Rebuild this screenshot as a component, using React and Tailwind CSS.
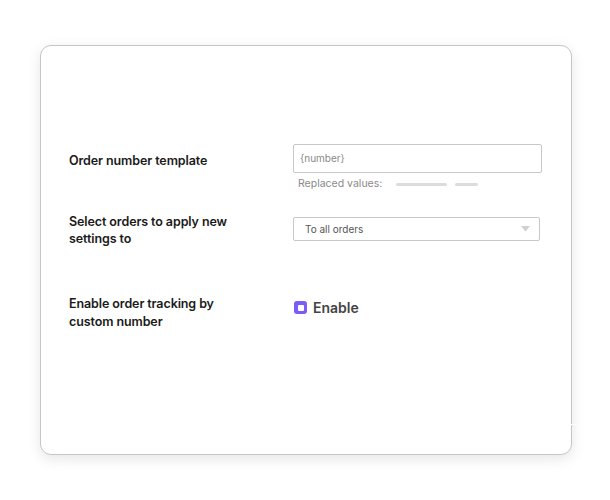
import React from "react";

export default function App() {
  return (
    <div className="w-[610px] h-[500px] bg-white relative" style={{ fontFamily: "Inter, 'Noto Sans', sans-serif" }}>
      <div className="absolute left-[40px] top-[45px] w-[532px] h-[410px] rounded-[11px] border border-[#c6c6c6] bg-white shadow-[0_4px_14px_rgba(0,0,0,0.10)] pt-[98px] pl-[28px]">
        {/* Row 1 */}
        <div className="flex items-start">
          <div className="w-[224px] h-[29px] pt-[6px] flex items-center text-[12.5px] font-semibold text-[#1a1a1a] tracking-[-0.1px]">
            Order number template
          </div>
          <div className="flex flex-col">
            <div className="w-[249px] h-[29px] border border-[#c8c8c8] rounded-[2px] flex items-center pl-[6px] text-[10px] text-[#8a8a8a]">
              {"{number}"}
            </div>
            <div className="flex items-center mt-[4px] pl-[5px] h-[14px]">
              <span className="text-[10.5px] text-[#8a8a8a]">Replaced values:</span>
              <span className="ml-[14px] w-[51px] h-[3px] rounded-full bg-[#dcdcdc]" />
              <span className="ml-[8px] w-[23px] h-[3px] rounded-full bg-[#dcdcdc]" />
            </div>
          </div>
        </div>

        {/* Row 2 */}
        <div className="flex items-start mt-[23px]">
          <div className="w-[224px] text-[12.5px] leading-[16.5px] font-semibold text-[#1a1a1a] tracking-[-0.1px]">
            Select orders to apply new
            <br />
            settings to
          </div>
          <div className="mt-[3px] w-[247px] h-[24px] border border-[#c8c8c8] rounded-[2px] flex items-center justify-between pl-[11px] pr-[9px] text-[10px] text-[#555]">
            <span>To all orders</span>
            <svg width="9" height="6" viewBox="0 0 9 6">
              <path d="M0 0 L9 0 L4.5 5.5 Z" fill="#d0d0d0" />
            </svg>
          </div>
        </div>

        {/* Row 3 */}
        <div className="flex items-start mt-[48px]">
          <div className="w-[224px] text-[12.5px] leading-[18px] font-semibold text-[#1a1a1a] tracking-[-0.1px]">
            Enable order tracking by
            <br />
            custom number
          </div>
          <div className="flex items-center mt-[2px] ml-[1px]">
            <span className="w-[13px] h-[13px] rounded-[3px] bg-[#7b5cf8] flex items-center justify-center">
              <span className="w-[6px] h-[6px] bg-white rounded-[1px]" />
            </span>
            <span className="ml-[6px] text-[14px] font-semibold text-[#444]">Enable</span>
          </div>
        </div>
      </div>
      <div className="absolute left-[571px] top-[424px] w-[6px] h-[1px] bg-white" />
    </div>
  );
}
